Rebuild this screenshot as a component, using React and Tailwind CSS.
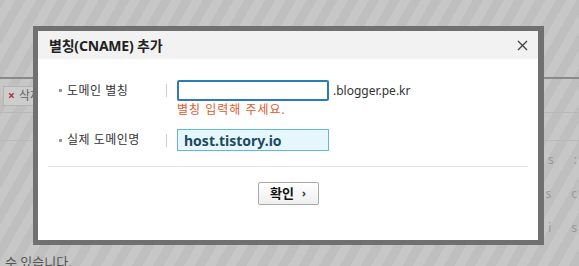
import React from "react";

const font = { fontFamily: '"Noto Sans", "Noto Sans CJK KR", sans-serif' };

export default function App() {
  return (
    <div
      className="relative w-[579px] h-[266px] overflow-hidden bg-[#c3c3c3] bg-[repeating-linear-gradient(-60deg,#bfbfbf_0px,#bfbfbf_9px,#c7c7c7_9px,#c7c7c7_18px)] text-[#333]"
      style={font}
    >
      {/* background page */}
      <div className="flex flex-col h-full">
        <div className="h-[77px] shrink-0" />
        <div className="h-[2px] bg-[#8a8a8a] shrink-0" />
        <div className="flex h-[34px] shrink-0 items-center border-b border-[#b8b8b8]">
          <div className="ml-[3px] flex h-[20px] items-center gap-[4px] border border-[#b4b4b4] bg-[#cdcdcd] px-[4px] text-[12px] text-[#666]">
            <span className="text-[12px] font-bold text-[#b03040]">×</span>
            <span>삭제</span>
          </div>
          <div className="flex-1" />
        </div>
        <div className="h-[28px] shrink-0 border-b border-[#bababa]" />
        <div className="flex-1 flex flex-col items-end pr-[2px] pt-[10px] gap-[16px] text-[12px] text-[#999]">
          <div className="flex gap-[20px]"><span>s</span><span>:</span></div>
          <div className="flex gap-[20px]"><span>s</span><span>c</span></div>
          <div className="flex gap-[20px]"><span>i</span><span>s</span></div>
        </div>
        <div className="h-[12px] shrink-0 pl-[5px] text-[13px] leading-[16px] text-[#555]">수 있습니다.</div>
      </div>

      {/* modal */}
      <div className="absolute left-[33px] top-[26px] w-[511px] h-[219px] bg-[#707070] pt-[5px] pl-[5px] pr-[6px] pb-[5px]">
        <div className="flex h-full flex-col bg-white">
          <div className="flex h-[28px] items-center justify-between bg-[#f2f2f2] pl-[11px] pr-[10px]">
            <span className="text-[14px] font-bold text-[#222] tracking-[-0.2px]">별칭(CNAME) 추가</span>
            <svg width="11" height="11" viewBox="0 0 11 11" className="mt-[1px]">
              <path d="M1 1L10 10M10 1L1 10" stroke="#444" strokeWidth="1.4" />
            </svg>
          </div>

          <div className="flex flex-col px-[10px] pt-[21px]">
            {/* row 1 */}
            <div className="flex items-start">
              <div className="flex w-[118px] h-[21px] items-center pl-[11px] text-[12px] text-[#333]">
                <span className="mr-[5px] inline-block h-[3px] w-[3px] bg-[#9a9a9a]" />
                <span className="tracking-[0.5px]">도메인 별칭</span>
              </div>
              <div className="mt-[4px] h-[13px] w-px bg-[#cfcfcf]" />
              <div className="ml-[10px] flex flex-col">
                <div className="flex items-center">
                  <div className="h-[21px] w-[152px] rounded-[2px] border-2 border-[#2b7bb9]" />
                  <span className="ml-[4px] text-[12px] text-[#333]">.blogger.pe.kr</span>
                </div>
                <span className="mt-[1px] text-[12px] leading-[16px] tracking-[1px] text-[#e4572a]">별칭 입력해 주세요.</span>
              </div>
            </div>

            {/* row 2 */}
            <div className="mt-[11px] flex items-center">
              <div className="flex w-[118px] items-center pl-[11px] text-[12px] text-[#333]">
                <span className="mr-[5px] inline-block h-[3px] w-[3px] bg-[#9a9a9a]" />
                <span className="tracking-[0.5px]">실제 도메인명</span>
              </div>
              <div className="h-[13px] w-px bg-[#cfcfcf]" />
              <div className="ml-[10px] flex h-[22px] w-[152px] items-center border border-[#5fb9d3] bg-[#e5f7fd] pl-[6px] text-[14px] font-bold text-[#1e4a5d]">
                host.tistory.io
              </div>
            </div>

            <div className="mt-[15px] h-px bg-[#e3e3e3]" />

            <div className="mt-[15px] flex justify-center">
              <div className="flex h-[23px] w-[61px] items-center justify-center gap-[8px] rounded-[2px] border border-[#a9a9a9] bg-[linear-gradient(#ffffff,#efefef)] text-[13px] font-bold text-[#111]">
                <span>확인</span>
                <span className="text-[11px] font-bold text-[#333] -mt-[1px]">›</span>
              </div>
            </div>
          </div>
        </div>
      </div>
    </div>
  );
}
